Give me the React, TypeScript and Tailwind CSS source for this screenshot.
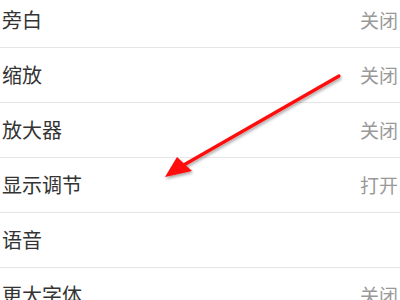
import React from 'react';

const rows = [
  { label: '旁白', value: '关闭' },
  { label: '缩放', value: '关闭' },
  { label: '放大器', value: '关闭' },
  { label: '显示调节', value: '打开' },
  { label: '语音', value: '' },
  { label: '更大字体', value: '关闭' },
];

export default function App() {
  return (
    <div
      className="relative w-[400px] h-[300px] overflow-hidden bg-white"
      style={{ fontFamily: '"Noto Sans CJK SC", "Noto Sans", sans-serif' }}
    >
      <div className="-mt-[7px] flex flex-col">
        {rows.map((row) => (
          <div key={row.label} className="flex h-[55px] items-center border-b border-[#e6e6e6] pl-[2px]">
            <span className="flex-1 text-[20px] text-[#333333]">{row.label}</span>
            <span className="w-[40px] shrink-0 whitespace-nowrap text-[19px] text-[#999999]">{row.value}</span>
          </div>
        ))}
      </div>
      <svg className="absolute left-0 top-0" width="400" height="300" viewBox="0 0 400 300">
        <defs>
          <filter id="sh" x="-20%" y="-20%" width="140%" height="140%">
            <feDropShadow dx="1" dy="2" stdDeviation="1.5" floodColor="#000" floodOpacity="0.35" />
          </filter>
        </defs>
        <g filter="url(#sh)">
          <line x1="339" y1="76" x2="182" y2="166" stroke="#ff0a0a" strokeWidth="3.2" strokeLinecap="round" />
          <polygon points="165,177 177,157 192,171" fill="#ff0a0a" />
        </g>
      </svg>
    </div>
  );
}
